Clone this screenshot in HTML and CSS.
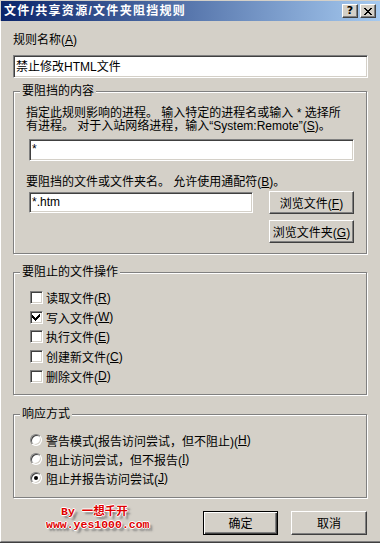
FILE: index.html
```html
<!DOCTYPE html>
<html lang="zh-CN">
<head>
    <meta charset="utf-8">
    <title>文件/共享资源/文件夹阻挡规则</title>
    <link rel="stylesheet" href="styles.css">
</head>
<body>

    <div class="window">
        <!-- Barra de titulo -->
        <div class="titlebar">
            <span class="title">文件/共享资源/文件夹阻挡规则</span>
            <span class="title-btn help">?</span>
            <span class="title-btn close">
                <svg width="8" height="7" viewBox="0 0 8 7" shape-rendering="crispEdges">
                    <path d="M0 0h2v1h1v1h2v-1h1v-1h2v1h-1v1h-1v1h-1v1h1v1h1v1h1v1h-2v-1h-1v-1h-2v1h-1v1h-2v-1h1v-1h1v-1h1v-1h-1v-1h-1v-1h-1z" fill="#000"/>
                </svg>
            </span>
        </div>

        <div class="content">
            <label class="field-label" for="nombre">规则名称(<u>A</u>)</label>
            <input class="textbox wide" id="nombre" type="text" value="禁止修改HTML文件">

            <!-- Grupo: contenido -->
            <fieldset class="group">
                <legend>要阻挡的内容</legend>
                <div class="group-body body-content">
                    <p class="hint">指定此规则影响的进程。 输入特定的进程名或输入 * 选择所<br>有进程。 对于入站网络进程，输入“System:Remote”(<u>S</u>)。</p>
                    <input class="textbox proc" type="text" value="*">
                    <p class="hint file-label">要阻挡的文件或文件夹名。 允许使用通配符(<u>B</u>)。</p>
                    <div class="file-row">
                        <input class="textbox file" type="text" value="*.htm">
                        <div class="browse">
                            <button class="btn">浏览文件(<u>F</u>)</button>
                            <button class="btn">浏览文件夹(<u>G</u>)</button>
                        </div>
                    </div>
                </div>
            </fieldset>

            <!-- Grupo: operaciones -->
            <fieldset class="group group-ops">
                <legend>要阻止的文件操作</legend>
                <div class="group-body body-ops">
                    <div class="option check-row"><span class="check"></span>读取文件(<u>R</u>)</div>
                    <div class="option check-row"><span class="check checked">
                        <svg width="9" height="9" viewBox="0 0 9 9" shape-rendering="crispEdges">
                            <path d="M7 1h1v3h-1v1h-1v1h-1v1h-1v1h-1v-1h-1v-1h-1v-1h-1v-3h1v1h1v1h1v1h1v-1h1v-1h1z" fill="#000"/>
                        </svg>
                    </span>写入文件(<u>W</u>)</div>
                    <div class="option check-row"><span class="check"></span>执行文件(<u>E</u>)</div>
                    <div class="option check-row"><span class="check"></span>创建新文件(<u>C</u>)</div>
                    <div class="option check-row"><span class="check"></span>删除文件(<u>D</u>)</div>
                </div>
            </fieldset>

            <!-- Grupo: respuesta -->
            <fieldset class="group group-resp">
                <legend>响应方式</legend>
                <div class="group-body body-resp">
                    <div class="option radio-row"><span class="radio"></span>警告模式(报告访问尝试，但不阻止)(<u>H</u>)</div>
                    <div class="option radio-row"><span class="radio"></span>阻止访问尝试，但不报告(<u>I</u>)</div>
                    <div class="option radio-row"><span class="radio selected"></span>阻止并报告访问尝试(<u>J</u>)</div>
                </div>
            </fieldset>

            <div class="footer">
                <div class="watermark">
                    <div class="wm-by">By 一想千开</div>
                    <div class="wm-url">www.yes1000.com</div>
                </div>
                <div class="actions">
                    <button class="btn btn-action default">确定</button>
                    <button class="btn btn-action">取消</button>
                </div>
            </div>
        </div>
    </div>

</body>
</html>
```

FILE: styles.css
```css
body {
    margin: 0;
    background-color: #d4d0c8;
    font-family: "Liberation Sans", "Noto Sans CJK SC", sans-serif;
    font-size: 12px;
    color: #000;
}

.window {
    display: flex;
    flex-direction: column;
    width: 380px;
    height: 543px;
    box-sizing: border-box;
    border-top: 1px solid #d4d0c8;
    border-bottom: 1px solid #404040;
}

.titlebar {
    display: flex;
    align-items: center;
    height: 20px;
    margin-left: 1px;
    padding: 0 4px 0 3px;
    background: linear-gradient(to right, #0a246a, #a6caf0);
}

.title {
    flex: 1;
    color: #fff;
    font-weight: bold;
    font-size: 12px;
    letter-spacing: 1.3px;
    line-height: 14px;
}

.title-btn {
    display: flex;
    align-items: center;
    justify-content: center;
    width: 16px;
    height: 14px;
    box-sizing: border-box;
    background-color: #d4d0c8;
    border-top: 1px solid #fff;
    border-left: 1px solid #fff;
    border-right: 1px solid #404040;
    border-bottom: 1px solid #404040;
    box-shadow: inset -1px -1px 0 #808080;
    font-family: "DejaVu Sans", sans-serif;
    font-weight: bold;
    font-size: 11px;
    line-height: 12px;
}

.title-btn.close {
    margin-left: 2px;
}

.content {
    flex: 1;
    display: flex;
    flex-direction: column;
    padding: 13px 12px 0 12px;
    border-left: 1px solid #fff;
    border-bottom: 1px solid #808080;
}

.field-label {
    line-height: 13px;
}

.textbox {
    display: block;
    box-sizing: border-box;
    margin: 0;
    padding: 1px 1px 4px 0;
    background-color: #fff;
    border-top: 1px solid #808080;
    border-left: 1px solid #808080;
    border-right: 1px solid #fff;
    border-bottom: 1px solid #fff;
    box-shadow: inset 1px 1px 0 #404040, inset -1px -1px 0 #d4d0c8;
    font-family: inherit;
    font-size: 12px;
    line-height: 13px;
    padding-left: 2px;
    outline: none;
}

.textbox.wide {
    width: 100%;
    height: 23px;
    margin-top: 8px;
}

.group {
    margin: 7px 0 0 0;
    padding: 0;
    min-inline-size: 0;
    border: 1px solid #808080;
    box-shadow: 1px 1px 0 #fff, inset 1px 1px 0 #fff;
    width: calc(100% - 1px);
    box-sizing: border-box;
}

.group legend {
    margin-left: 6px;
    padding: 0 2px;
    line-height: 13px;
    background-color: #d4d0c8;
}

.group-ops {
    margin-top: 12px;
}

.group-resp {
    margin-top: 13px;
}

.body-content {
    padding: 9px 12px 10px 12px;
}

.hint {
    margin: 0;
    line-height: 13px;
    white-space: nowrap;
}

.textbox.proc {
    width: calc(100% - 3px);
    height: 22px;
    margin: 6px 0 0 3px;
}

.file-label {
    margin-top: 15px;
}

.file-row {
    display: flex;
    align-items: flex-start;
    margin-top: 2px;
}

.textbox.file {
    width: 224px;
    height: 21px;
    margin: 1px 0 0 3px;
    padding-bottom: 3px;
}

.browse {
    display: flex;
    flex-direction: column;
    gap: 6px;
    margin-left: auto;
}

.btn {
    box-sizing: border-box;
    width: 85px;
    height: 23px;
    margin: 0;
    padding: 0;
    background-color: #d4d0c8;
    border-top: 1px solid #fff;
    border-left: 1px solid #fff;
    border-right: 1px solid #404040;
    border-bottom: 1px solid #404040;
    box-shadow: inset -1px -1px 0 #808080;
    font-family: inherit;
    font-size: 12px;
    color: #000;
}

.body-ops {
    padding: 9px 0 8px 16px;
}

.body-resp {
    padding: 10px 0 9px 16px;
}

.option {
    display: flex;
    align-items: center;
    white-space: nowrap;
}

.check-row {
    height: 19.6px;
}

.radio-row {
    height: 19px;
}

.check {
    display: flex;
    align-items: center;
    justify-content: center;
    width: 13px;
    height: 13px;
    box-sizing: border-box;
    margin-right: 3px;
    background-color: #fff;
    border-top: 1px solid #808080;
    border-left: 1px solid #808080;
    border-right: 1px solid #fff;
    border-bottom: 1px solid #fff;
    box-shadow: inset 1px 1px 0 #404040, inset -1px -1px 0 #d4d0c8;
}

.radio {
    position: relative;
    width: 12px;
    height: 12px;
    box-sizing: border-box;
    margin-right: 4px;
    border-radius: 50%;
    background-color: #fff;
    border: 1px solid;
    border-color: #808080 #fff #fff #808080;
    box-shadow: inset 1px 1px 0 #404040, inset -1px -1px 0 #d4d0c8;
}

.radio.selected::after {
    content: "";
    position: absolute;
    left: 3px;
    top: 3px;
    width: 4px;
    height: 4px;
    border-radius: 50%;
    background-color: #000;
}

.footer {
    display: flex;
    align-items: flex-start;
    margin-top: 13px;
}

.watermark {
    margin: -6px 0 0 33px;
    color: #e00000;
    font-family: "Liberation Mono", "Noto Sans CJK SC", monospace;
    font-weight: bold;
    font-size: 11.5px;
    line-height: 13px;
    text-shadow: 1px 0 0 #fff, -1px 0 0 #fff, 0 1px 0 #fff, 0 -1px 0 #fff, 3px 3px 2px #7a7a7a;
}

.wm-by {
    padding-left: 15px;
}

.actions {
    display: flex;
    gap: 13px;
    margin-left: auto;
    margin-right: 1px;
}

.btn-action {
    width: 76px;
    height: 24px;
}

.btn-action.default {
    width: 75px;
    border: 1px solid #000;
    box-shadow: inset 1px 1px 0 #fff, inset -1px -1px 0 #404040, inset -2px -2px 0 #808080;
}
```
